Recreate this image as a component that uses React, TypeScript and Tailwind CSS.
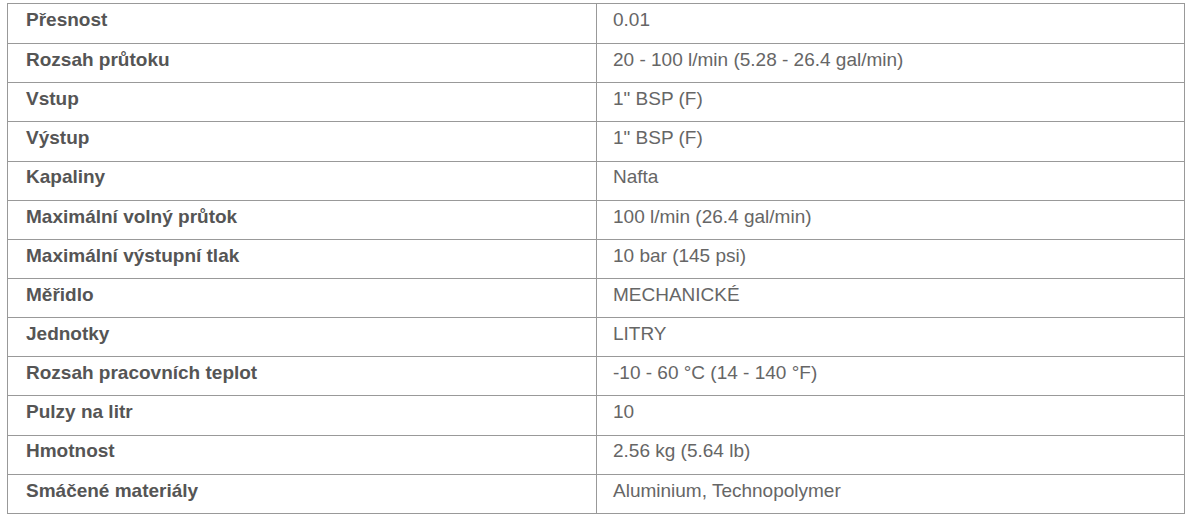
import React from 'react';

const rows: [string, string][] = [
  ['Přesnost', '0.01'],
  ['Rozsah průtoku', '20 - 100 l/min (5.28 - 26.4 gal/min)'],
  ['Vstup', '1" BSP (F)'],
  ['Výstup', '1" BSP (F)'],
  ['Kapaliny', 'Nafta'],
  ['Maximální volný průtok', '100 l/min (26.4 gal/min)'],
  ['Maximální výstupní tlak', '10 bar (145 psi)'],
  ['Měřidlo', 'MECHANICKÉ'],
  ['Jednotky', 'LITRY'],
  ['Rozsah pracovních teplot', '-10 - 60 °C (14 - 140 °F)'],
  ['Pulzy na litr', '10'],
  ['Hmotnost', '2.56 kg (5.64 lb)'],
  ['Smáčené materiály', 'Aluminium, Technopolymer'],
];

const App: React.FC = () => {
  return (
    <div className="w-[1191px] h-[520px] bg-white pt-[3px] pl-[7px] font-['Liberation_Sans',Arial,sans-serif] text-[19px]">
      <div className="w-[1178px] border border-[#999]">
        {rows.map(([label, value], i) => (
          <div key={label} className={`flex h-[39.15px] ${i > 0 ? 'border-t border-[#999]' : ''}`}>
            <div className="w-[589px] border-r border-[#999] pl-[18px] pb-[6px] flex items-center font-bold text-[#555]">{label}</div>
            <div className="flex-1 pl-[16px] pb-[6px] flex items-center text-[#666]">{value}</div>
          </div>
        ))}
      </div>
    </div>
  );
};

export default App;
